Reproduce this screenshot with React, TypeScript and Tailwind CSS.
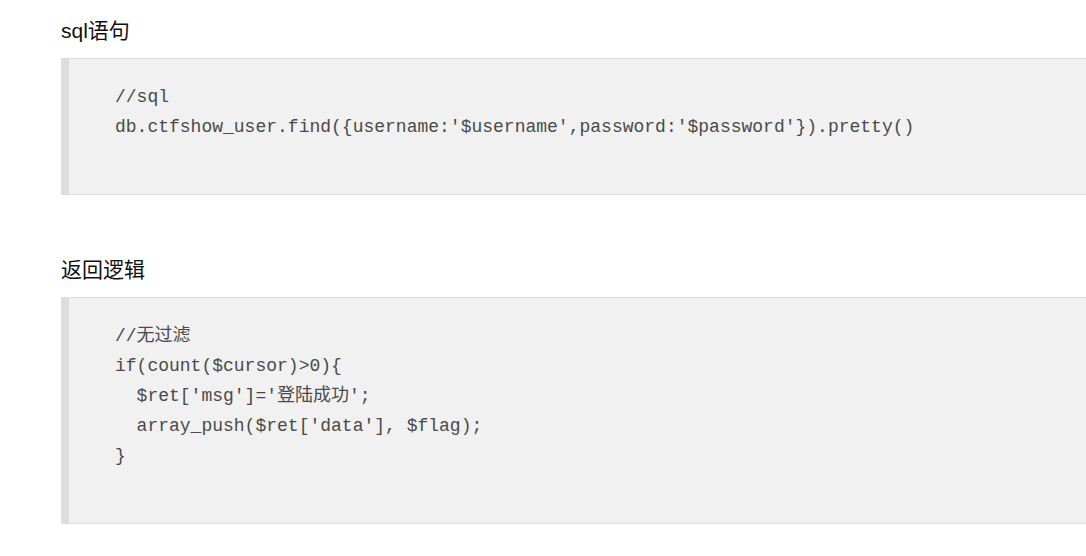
import React from 'react';

const SECTIONS = [
  {
    title: 'sql语句',
    lines: [
      '//sql',
      "db.ctfshow_user.find({username:'$username',password:'$password'}).pretty()",
    ],
  },
  {
    title: '返回逻辑',
    lines: [
      '//无过滤',
      'if(count($cursor)>0){',
      "  $ret['msg']='登陆成功';",
      "  array_push($ret['data'], $flag);",
      '}',
    ],
  },
];

const CodeBlock = ({ lines }: { lines: string[] }) => (
  <pre
    className="w-[1060px] bg-[#f1f1f1] border-y border-[#dedede] border-l-8 border-l-[#dddddd] pl-[46px] pt-[23px] pb-[52px] text-[18px] leading-[30px] text-[#4a4a4a] whitespace-pre"
    style={{ fontFamily: '"Liberation Mono", "Noto Sans CJK SC", monospace' }}
  >
    {lines.map((line, i) => (
      <div key={i}>{line}</div>
    ))}
  </pre>
);

export default function App() {
  return (
    <div
      className="w-[1086px] h-[556px] overflow-hidden bg-white pl-[61px] pt-[17px]"
      style={{ fontFamily: '"Liberation Sans", "Noto Sans CJK SC", sans-serif' }}
    >
      {SECTIONS.map((section, idx) => (
        <section key={section.title} className={idx > 0 ? 'mt-[61px]' : ''}>
          <h3 className="text-[21px] leading-[28px] text-[#111] mb-[13px]">{section.title}</h3>
          <CodeBlock lines={section.lines} />
        </section>
      ))}
    </div>
  );
}
